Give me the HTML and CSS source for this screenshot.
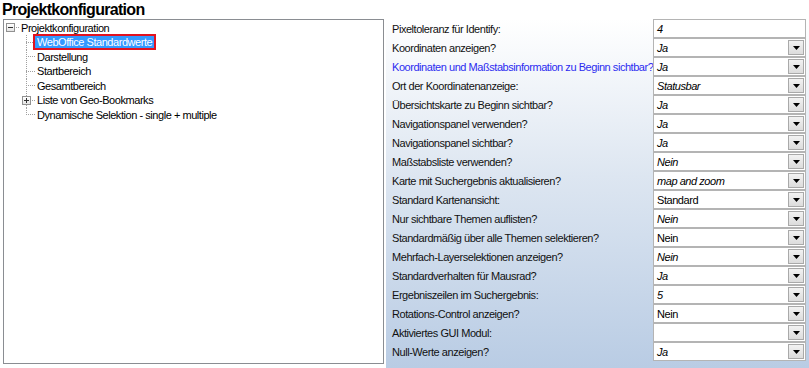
FILE: index.html
```html
<!DOCTYPE html>
<html lang="de">
<head>
<meta charset="utf-8">
<title>Projektkonfiguration</title>
<link rel="stylesheet" href="styles.css">
</head>
<body>
<div class="title">Projektkonfiguration</div>
<div class="main">
  <div class="tree-panel">
    <div class="node root">
      <span class="box"><span class="minus"></span></span>
      <span class="rh"></span>
      <span class="txt">Projektkonfiguration</span>
    </div>
    <div class="node child">
      <span class="conn"><span class="h"></span></span>
      <span class="txt sel">WebOffice Standardwerte</span>
    </div>
    <div class="node child">
      <span class="conn"><span class="h"></span></span>
      <span class="txt">Darstellung</span>
    </div>
    <div class="node child">
      <span class="conn"><span class="h"></span></span>
      <span class="txt">Startbereich</span>
    </div>
    <div class="node child">
      <span class="conn"><span class="h"></span></span>
      <span class="txt">Gesamtbereich</span>
    </div>
    <div class="node child">
      <span class="conn"><span class="box cbox"><span class="minus"></span><span class="plusv"></span></span><span class="h short"></span></span>
      <span class="txt">Liste von Geo-Bookmarks</span>
    </div>
    <div class="node child">
      <span class="conn last"><span class="h"></span></span>
      <span class="txt">Dynamische Selektion - single + multiple</span>
    </div>
  </div>
  <div class="props">
    <div class="prow"><div class="lbl">Pixeltoleranz für Identify:</div><div class="val"><span class="v it">4</span></div></div>
    <div class="prow"><div class="lbl">Koordinaten anzeigen?</div><div class="val"><span class="v it">Ja</span><span class="dd"><svg width="7" height="4" viewBox="0 0 7 4"><polygon points="0,0 7,0 3.5,4" fill="#000"/></svg></span></div></div>
    <div class="prow"><div class="lbl blue">Koordinaten und Maßstabsinformation zu Beginn sichtbar?</div><div class="val"><span class="v it">Ja</span><span class="dd"><svg width="7" height="4" viewBox="0 0 7 4"><polygon points="0,0 7,0 3.5,4" fill="#000"/></svg></span></div></div>
    <div class="prow"><div class="lbl">Ort der Koordinatenanzeige:</div><div class="val"><span class="v it">Statusbar</span><span class="dd"><svg width="7" height="4" viewBox="0 0 7 4"><polygon points="0,0 7,0 3.5,4" fill="#000"/></svg></span></div></div>
    <div class="prow"><div class="lbl">Übersichtskarte zu Beginn sichtbar?</div><div class="val"><span class="v it">Ja</span><span class="dd"><svg width="7" height="4" viewBox="0 0 7 4"><polygon points="0,0 7,0 3.5,4" fill="#000"/></svg></span></div></div>
    <div class="prow"><div class="lbl">Navigationspanel verwenden?</div><div class="val"><span class="v it">Ja</span><span class="dd"><svg width="7" height="4" viewBox="0 0 7 4"><polygon points="0,0 7,0 3.5,4" fill="#000"/></svg></span></div></div>
    <div class="prow"><div class="lbl">Navigationspanel sichtbar?</div><div class="val"><span class="v it">Ja</span><span class="dd"><svg width="7" height="4" viewBox="0 0 7 4"><polygon points="0,0 7,0 3.5,4" fill="#000"/></svg></span></div></div>
    <div class="prow"><div class="lbl">Maßstabsliste verwenden?</div><div class="val"><span class="v it">Nein</span><span class="dd"><svg width="7" height="4" viewBox="0 0 7 4"><polygon points="0,0 7,0 3.5,4" fill="#000"/></svg></span></div></div>
    <div class="prow"><div class="lbl">Karte mit Suchergebnis aktualisieren?</div><div class="val"><span class="v it">map and zoom</span><span class="dd"><svg width="7" height="4" viewBox="0 0 7 4"><polygon points="0,0 7,0 3.5,4" fill="#000"/></svg></span></div></div>
    <div class="prow"><div class="lbl">Standard Kartenansicht:</div><div class="val"><span class="v">Standard</span><span class="dd"><svg width="7" height="4" viewBox="0 0 7 4"><polygon points="0,0 7,0 3.5,4" fill="#000"/></svg></span></div></div>
    <div class="prow"><div class="lbl">Nur sichtbare Themen auflisten?</div><div class="val"><span class="v it">Nein</span><span class="dd"><svg width="7" height="4" viewBox="0 0 7 4"><polygon points="0,0 7,0 3.5,4" fill="#000"/></svg></span></div></div>
    <div class="prow"><div class="lbl">Standardmäßig über alle Themen selektieren?</div><div class="val"><span class="v">Nein</span><span class="dd"><svg width="7" height="4" viewBox="0 0 7 4"><polygon points="0,0 7,0 3.5,4" fill="#000"/></svg></span></div></div>
    <div class="prow"><div class="lbl">Mehrfach-Layerselektionen anzeigen?</div><div class="val"><span class="v it">Nein</span><span class="dd"><svg width="7" height="4" viewBox="0 0 7 4"><polygon points="0,0 7,0 3.5,4" fill="#000"/></svg></span></div></div>
    <div class="prow"><div class="lbl">Standardverhalten für Mausrad?</div><div class="val"><span class="v it">Ja</span><span class="dd"><svg width="7" height="4" viewBox="0 0 7 4"><polygon points="0,0 7,0 3.5,4" fill="#000"/></svg></span></div></div>
    <div class="prow"><div class="lbl">Ergebniszeilen im Suchergebnis:</div><div class="val"><span class="v it">5</span><span class="dd"><svg width="7" height="4" viewBox="0 0 7 4"><polygon points="0,0 7,0 3.5,4" fill="#000"/></svg></span></div></div>
    <div class="prow"><div class="lbl">Rotations-Control anzeigen?</div><div class="val"><span class="v">Nein</span><span class="dd"><svg width="7" height="4" viewBox="0 0 7 4"><polygon points="0,0 7,0 3.5,4" fill="#000"/></svg></span></div></div>
    <div class="prow"><div class="lbl">Aktiviertes GUI Modul:</div><div class="val"><span class="v"></span><span class="dd"><svg width="7" height="4" viewBox="0 0 7 4"><polygon points="0,0 7,0 3.5,4" fill="#000"/></svg></span></div></div>
    <div class="prow"><div class="lbl">Null-Werte anzeigen?</div><div class="val"><span class="v it">Ja</span><span class="dd"><svg width="7" height="4" viewBox="0 0 7 4"><polygon points="0,0 7,0 3.5,4" fill="#000"/></svg></span></div></div>
  </div>
</div>
</body>
</html>
```
FILE: styles.css
```css
html, body {
  margin: 0;
  padding: 0;
}
body {
  width: 809px;
  height: 368px;
  overflow: hidden;
  background: #fff;
  font-family: "Liberation Sans", Arial, sans-serif;
  color: #000;
}
.title {
  height: 19px;
  line-height: 19px;
  font-size: 16px;
  font-weight: bold;
  letter-spacing: -0.7px;
  padding-left: 2px;
  white-space: nowrap;
}
.main {
  display: flex;
  height: 349px;
}
.tree-panel {
  box-sizing: border-box;
  margin-left: 3px;
  width: 381px;
  height: 345px;
  border: 1px solid #8a8d92;
  background: #fff;
  padding-top: 0.5px;
  font-size: 11px;
  letter-spacing: -0.45px;
}
.node {
  display: flex;
  align-items: center;
  height: 14.5px;
  white-space: nowrap;
}
.box {
  box-sizing: border-box;
  width: 9px;
  height: 9px;
  border: 1px solid #919191;
  background: linear-gradient(#ffffff, #e4e4e4);
  display: flex;
  align-items: center;
  justify-content: center;
  flex: none;
  position: relative;
}
.root .box {
  margin-left: 2px;
}
.minus {
  width: 5px;
  height: 1px;
  background: #333;
}
.plusv {
  position: absolute;
  left: 3px;
  top: 1px;
  width: 1px;
  height: 5px;
  background: #333;
}
.rh {
  width: 3px;
  margin-left: 1px;
  height: 1px;
  background: linear-gradient(to right, #a0a0a0 50%, transparent 0) 0 0 / 2px 1px repeat-x;
  flex: none;
}
.txt {
  padding: 0 2px;
  line-height: 12px;
}
.conn {
  display: flex;
  align-items: center;
  width: 31px;
  height: 100%;
  flex: none;
  background: linear-gradient(#a0a0a0 50%, transparent 0) 22px 0 / 1px 2px repeat-y;
}
.conn.last {
  background:
    linear-gradient(transparent 50%, #fff 50%) 22px 0 / 1px 100% no-repeat,
    linear-gradient(#a0a0a0 50%, transparent 0) 22px 0 / 1px 2px repeat-y;
}
.conn .h {
  margin-left: 22px;
  width: 9px;
  height: 1px;
  background: linear-gradient(to right, #a0a0a0 50%, transparent 0) 0 0 / 2px 1px repeat-x;
}
.conn .cbox {
  margin-left: 18px;
}
.conn .h.short {
  margin-left: 1px;
  width: 3px;
}
.sel {
  background: #3399ff;
  color: #fff;
  outline: 2px solid #e2121f;
}
.props {
  flex: 1;
  margin-left: 2px;
  height: 349px;
  background: linear-gradient(#ffffff 0%, #dde6f1 45%, #b9cce4 100%);
  font-size: 11px;
  letter-spacing: -0.45px;
}
.prow {
  display: flex;
  align-items: center;
  height: 19px;
}
.lbl {
  box-sizing: border-box;
  width: 267px;
  padding-left: 6px;
  white-space: nowrap;
  color: #111;
}
.lbl.blue {
  color: #2b2bf0;
}
.val {
  box-sizing: border-box;
  width: 153px;
  height: 19px;
  border: 1px solid #b4b4b4;
  background: #fff;
  display: flex;
  align-items: center;
  padding-left: 3px;
}
.v {
  flex: 1;
  white-space: nowrap;
}
.it {
  font-style: italic;
}
.dd {
  box-sizing: border-box;
  width: 16px;
  height: 15px;
  margin-right: 1px;
  border: 1px solid #a9a9a9;
  background: linear-gradient(#f2f2f2, #dcdcdc);
  display: flex;
  align-items: center;
  justify-content: center;
  flex: none;
}
.dd svg {
  display: block;
  margin-top: 1px;
}
```
